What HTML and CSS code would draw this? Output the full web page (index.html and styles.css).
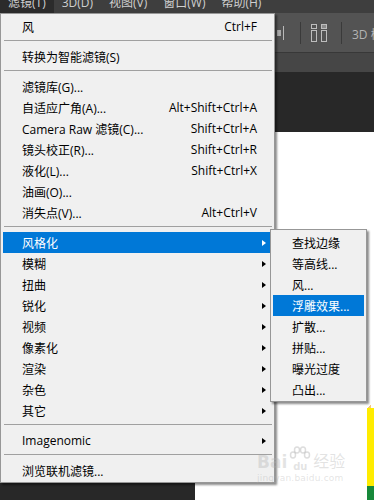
FILE: index.html
```html
<!DOCTYPE html>
<html lang="zh-CN">
<head>
<meta charset="utf-8">
<title>滤镜菜单</title>
<link rel="stylesheet" href="styles.css">
</head>
<body>
<div class="app">
  <div class="menubar">
    <span class="mb-item active">滤镜(T)</span>
    <span class="mb-item">3D(D)</span>
    <span class="mb-item">视图(V)</span>
    <span class="mb-item">窗口(W)</span>
    <span class="mb-item">帮助(H)</span>
  </div>
  <div class="toolbar">
    <svg class="tb-icon1" width="12" height="16" viewBox="0 0 12 16"><rect x="3" y="5" width="4" height="6" fill="#a8a8a8"/><line x1="9.5" y1="1" x2="9.5" y2="15" stroke="#b8b8b8"/></svg>
    <span class="tb-sep"></span>
    <svg class="tb-icon2" width="17" height="18" viewBox="0 0 17 18" fill="none" stroke="#bdbdbd"><rect x="0.5" y="0.5" width="5" height="4"/><rect x="0.5" y="6.5" width="5" height="11"/><rect x="10.5" y="0.5" width="5" height="4" fill="#8a8a8a"/><rect x="10.5" y="6.5" width="5" height="11"/></svg>
    <span class="tb-sep"></span>
    <span class="tb-text">3D 模式</span>
  </div>
  <div class="tabbar"></div>
  <div class="workspace">
    <div class="doc">
      <div class="doc-fill"></div>
      <div class="strip">
        <div class="strip-top"></div>
        <div class="strip-yellow"></div>
        <div class="strip-green"></div>
      </div>
    </div>
  </div>

  <div class="menu main-menu">
    <div class="row"><span class="label">风</span><span class="key">Ctrl+F</span></div>
    <div class="sep"></div>
    <div class="row"><span class="label">转换为智能滤镜(S)</span></div>
    <div class="sep"></div>
    <div class="row"><span class="label">滤镜库(G)...</span></div>
    <div class="row"><span class="label">自适应广角(A)...</span><span class="key">Alt+Shift+Ctrl+A</span></div>
    <div class="row"><span class="label">Camera Raw 滤镜(C)...</span><span class="key">Shift+Ctrl+A</span></div>
    <div class="row"><span class="label">镜头校正(R)...</span><span class="key">Shift+Ctrl+R</span></div>
    <div class="row"><span class="label">液化(L)...</span><span class="key">Shift+Ctrl+X</span></div>
    <div class="row"><span class="label">油画(O)...</span></div>
    <div class="row"><span class="label">消失点(V)...</span><span class="key">Alt+Ctrl+V</span></div>
    <div class="sep"></div>
    <div class="row sub hl"><span class="label">风格化</span><span class="arrow"></span></div>
    <div class="row sub"><span class="label">模糊</span><span class="arrow"></span></div>
    <div class="row sub"><span class="label">扭曲</span><span class="arrow"></span></div>
    <div class="row sub"><span class="label">锐化</span><span class="arrow"></span></div>
    <div class="row sub"><span class="label">视频</span><span class="arrow"></span></div>
    <div class="row sub"><span class="label">像素化</span><span class="arrow"></span></div>
    <div class="row sub"><span class="label">渲染</span><span class="arrow"></span></div>
    <div class="row sub"><span class="label">杂色</span><span class="arrow"></span></div>
    <div class="row sub"><span class="label">其它</span><span class="arrow"></span></div>
    <div class="sep"></div>
    <div class="row sub"><span class="label">Imagenomic</span><span class="arrow"></span></div>
    <div class="sep"></div>
    <div class="row"><span class="label">浏览联机滤镜...</span></div>
  </div>

  <div class="menu sub-menu">
    <div class="row"><span class="label">查找边缘</span></div>
    <div class="row"><span class="label">等高线...</span></div>
    <div class="row"><span class="label">风...</span></div>
    <div class="row hl"><span class="label">浮雕效果...</span></div>
    <div class="row"><span class="label">扩散...</span></div>
    <div class="row"><span class="label">拼贴...</span></div>
    <div class="row"><span class="label">曝光过度</span></div>
    <div class="row"><span class="label">凸出...</span></div>
  </div>

  <div class="watermark">
    <div class="wm-top">
      <span class="wm-bai">Bai</span>
      <span class="wm-paw">
        <svg width="24" height="16" viewBox="0 0 24 16" fill="none" stroke="rgba(170,170,170,0.4)" stroke-width="1.5"><ellipse cx="5" cy="9" rx="2.5" ry="3"/><ellipse cx="9" cy="4" rx="2.5" ry="3"/><ellipse cx="15" cy="4" rx="2.5" ry="3"/><ellipse cx="19" cy="9" rx="2.5" ry="3"/></svg>
        <span class="wm-du">du</span>
      </span>
      <span class="wm-jy">经验</span>
    </div>
    <div class="wm-url">jingyan.baidu.com</div>
  </div>
</div>
</body>
</html>
```

FILE: styles.css
```css
html, body {
  margin: 0;
  padding: 0;
}
body {
  width: 374px;
  height: 500px;
  overflow: hidden;
  background: #282828;
  font-family: "Open Sans", "Noto Sans CJK SC", sans-serif;
  font-size: 12px;
}
.app {
  position: relative;
  width: 374px;
  height: 500px;
  display: flex;
  flex-direction: column;
  overflow: hidden;
}

/* menubar */
.menubar {
  height: 20px;
  margin-top: -7px;
  background: #3e3e3e;
  display: flex;
  align-items: center;
  color: #cfcfcf;
  flex: none;
}
.mb-item {
  padding: 0 8px;
  height: 20px;
  line-height: 20px;
  flex: none;
}
.mb-item.active {
  background: #2b2b2b;
}

/* toolbar */
.toolbar {
  height: 39px;
  background: #535353;
  border-bottom: 1px solid #383838;
  display: flex;
  align-items: center;
  padding-left: 274px;
  flex: none;
}
.toolbar > * { flex: none; }
.tb-icon1 { margin-right: 14px; }
.tb-sep {
  width: 1px;
  height: 22px;
  background: #3a3a3a;
  margin-right: 10px;
}
.tb-icon2 { margin-right: 13px; }
.tb-text {
  color: #b4b4b4;
  white-space: nowrap;
  margin-top: 3px;
}

.tabbar {
  height: 19px;
  background: #464646;
  flex: none;
}

/* workspace */
.workspace {
  flex: 1;
  background: #282828;
  padding: 60px 0 0 195px;
  display: flex;
}
.doc {
  flex: 1;
  background: #ffffff;
  display: flex;
}
.doc-fill { flex: 1; }
.strip {
  width: 7px;
  display: flex;
  flex-direction: column;
}
.strip-top {
  height: 270px;
  margin-top: 6px;
  background: linear-gradient(to bottom right, transparent 60%, #f4c77c 60%) bottom left / 4px 4px no-repeat;
}
.strip-yellow {
  height: 78px;
  background: #ffec00;
}
.strip-green {
  flex: 1;
  background: #17893a;
}

/* menus */
.menu {
  position: absolute;
  background: #f0f0f0;
  border: 1px solid #979797;
  box-shadow: 2px 2px 2px rgba(0, 0, 0, 0.45);
  color: #000;
  box-sizing: border-box;
}
.main-menu {
  left: 0;
  top: 13px;
  width: 275px;
  padding: 2px 0 1px;
}
.sub-menu {
  left: 270px;
  top: 229px;
  width: 97px;
  padding: 2px 0 1px;
}
.row {
  height: 21px;
  margin: 0 2px;
  padding: 0 6px 0 19px;
  display: flex;
  align-items: center;
  white-space: nowrap;
}
.row .label { flex: 1; }
.row .key { margin-right: 9px; }
.row.hl {
  background: #0078d7;
  color: #fff;
}
.arrow {
  width: 0;
  height: 0;
  border-left: 4px solid #000;
  border-top: 3.5px solid transparent;
  border-bottom: 3.5px solid transparent;
}
.row.hl .arrow { border-left-color: #fff; }
.sep {
  height: 1px;
  background: #a0a0a0;
  margin: 3px 2px 5px 3px;
}

/* watermark */
.watermark {
  position: absolute;
  left: 257px;
  top: 446px;
  color: rgba(175, 175, 175, 0.35);
  font-family: "DejaVu Sans", "Noto Sans CJK SC", sans-serif;
  pointer-events: none;
}
.wm-top {
  display: flex;
  align-items: flex-end;
  height: 26px;
}
.wm-bai {
  font-size: 17px;
  font-weight: bold;
  line-height: 20px;
}
.wm-paw {
  display: flex;
  flex-direction: column;
  align-items: center;
  width: 24px;
  margin: 0 1px;
}
.wm-du {
  font-size: 10px;
  font-weight: bold;
  line-height: 10px;
}
.wm-jy {
  font-size: 16px;
  line-height: 20px;
}
.wm-url {
  font-size: 9px;
  line-height: 11px;
  margin-top: 1px;
  letter-spacing: 0.2px;
}
```
